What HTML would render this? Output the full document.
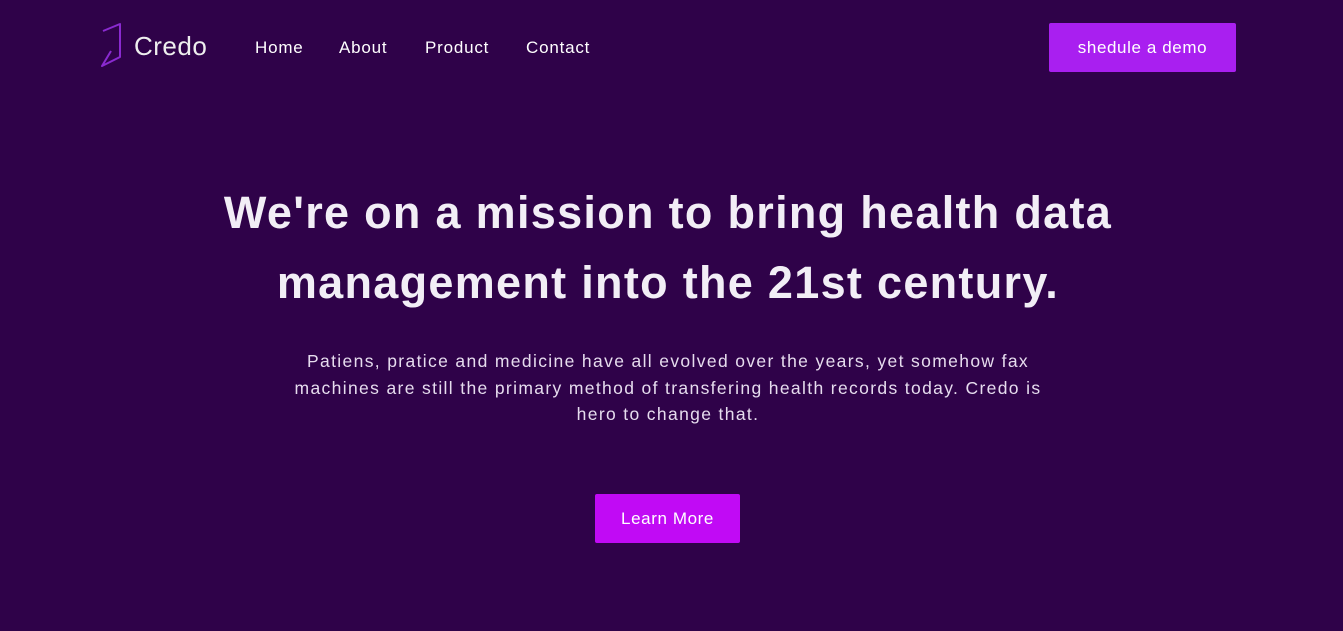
<!DOCTYPE html>
<html><head><style>
body{margin:0;width:1343px;height:631px;background:#2f0249;font-family:"Liberation Sans",sans-serif;color:#fff;overflow:hidden;position:relative}
.nav a{position:absolute;top:38px;font-size:17px;color:#fff;text-decoration:none;letter-spacing:0.8px}
.logo{position:absolute;left:134px;top:31px;font-size:26px;color:#eee;letter-spacing:0.5px}
.demo{position:absolute;left:1049px;top:23px;width:187px;height:49px;background:#a91ff0;border-radius:2px;font-size:17px;line-height:49px;text-align:center;letter-spacing:0.6px}
h1{position:absolute;top:178px;left:0;width:1336px;margin:0;text-align:center;font-size:45px;font-weight:bold;line-height:70px;color:#f2eef6;letter-spacing:1.3px}
p{position:absolute;top:348px;left:168px;width:1000px;margin:0;text-align:center;font-size:17.5px;line-height:26.5px;color:#e6dcee;letter-spacing:1.35px;white-space:nowrap}
.lm{position:absolute;left:595px;top:494px;width:145px;height:49px;background:#c10af5;border-radius:2px;font-size:17px;line-height:49px;text-align:center;letter-spacing:0.6px}
</style></head><body>
<svg style="position:absolute;left:0;top:0" width="130" height="80"><path d="M103 31 L120 24 L120 57 L102 66 L111 51" fill="none" stroke="#8a2ad0" stroke-width="2" stroke-linejoin="round"/></svg>
<div class="logo">Credo</div>
<div class="nav"><a style="left:255px">Home</a><a style="left:339px">About</a><a style="left:425px">Product</a><a style="left:526px">Contact</a></div>
<div class="demo">shedule a demo</div>
<h1>We're on a mission to bring health data<br>management into the 21st century.</h1>
<p>Patiens, pratice and medicine have all evolved over the years, yet somehow fax<br>machines are still the primary method of transfering health records today. Credo is<br>hero to change that.</p>
<div class="lm">Learn More</div>
</body></html>
